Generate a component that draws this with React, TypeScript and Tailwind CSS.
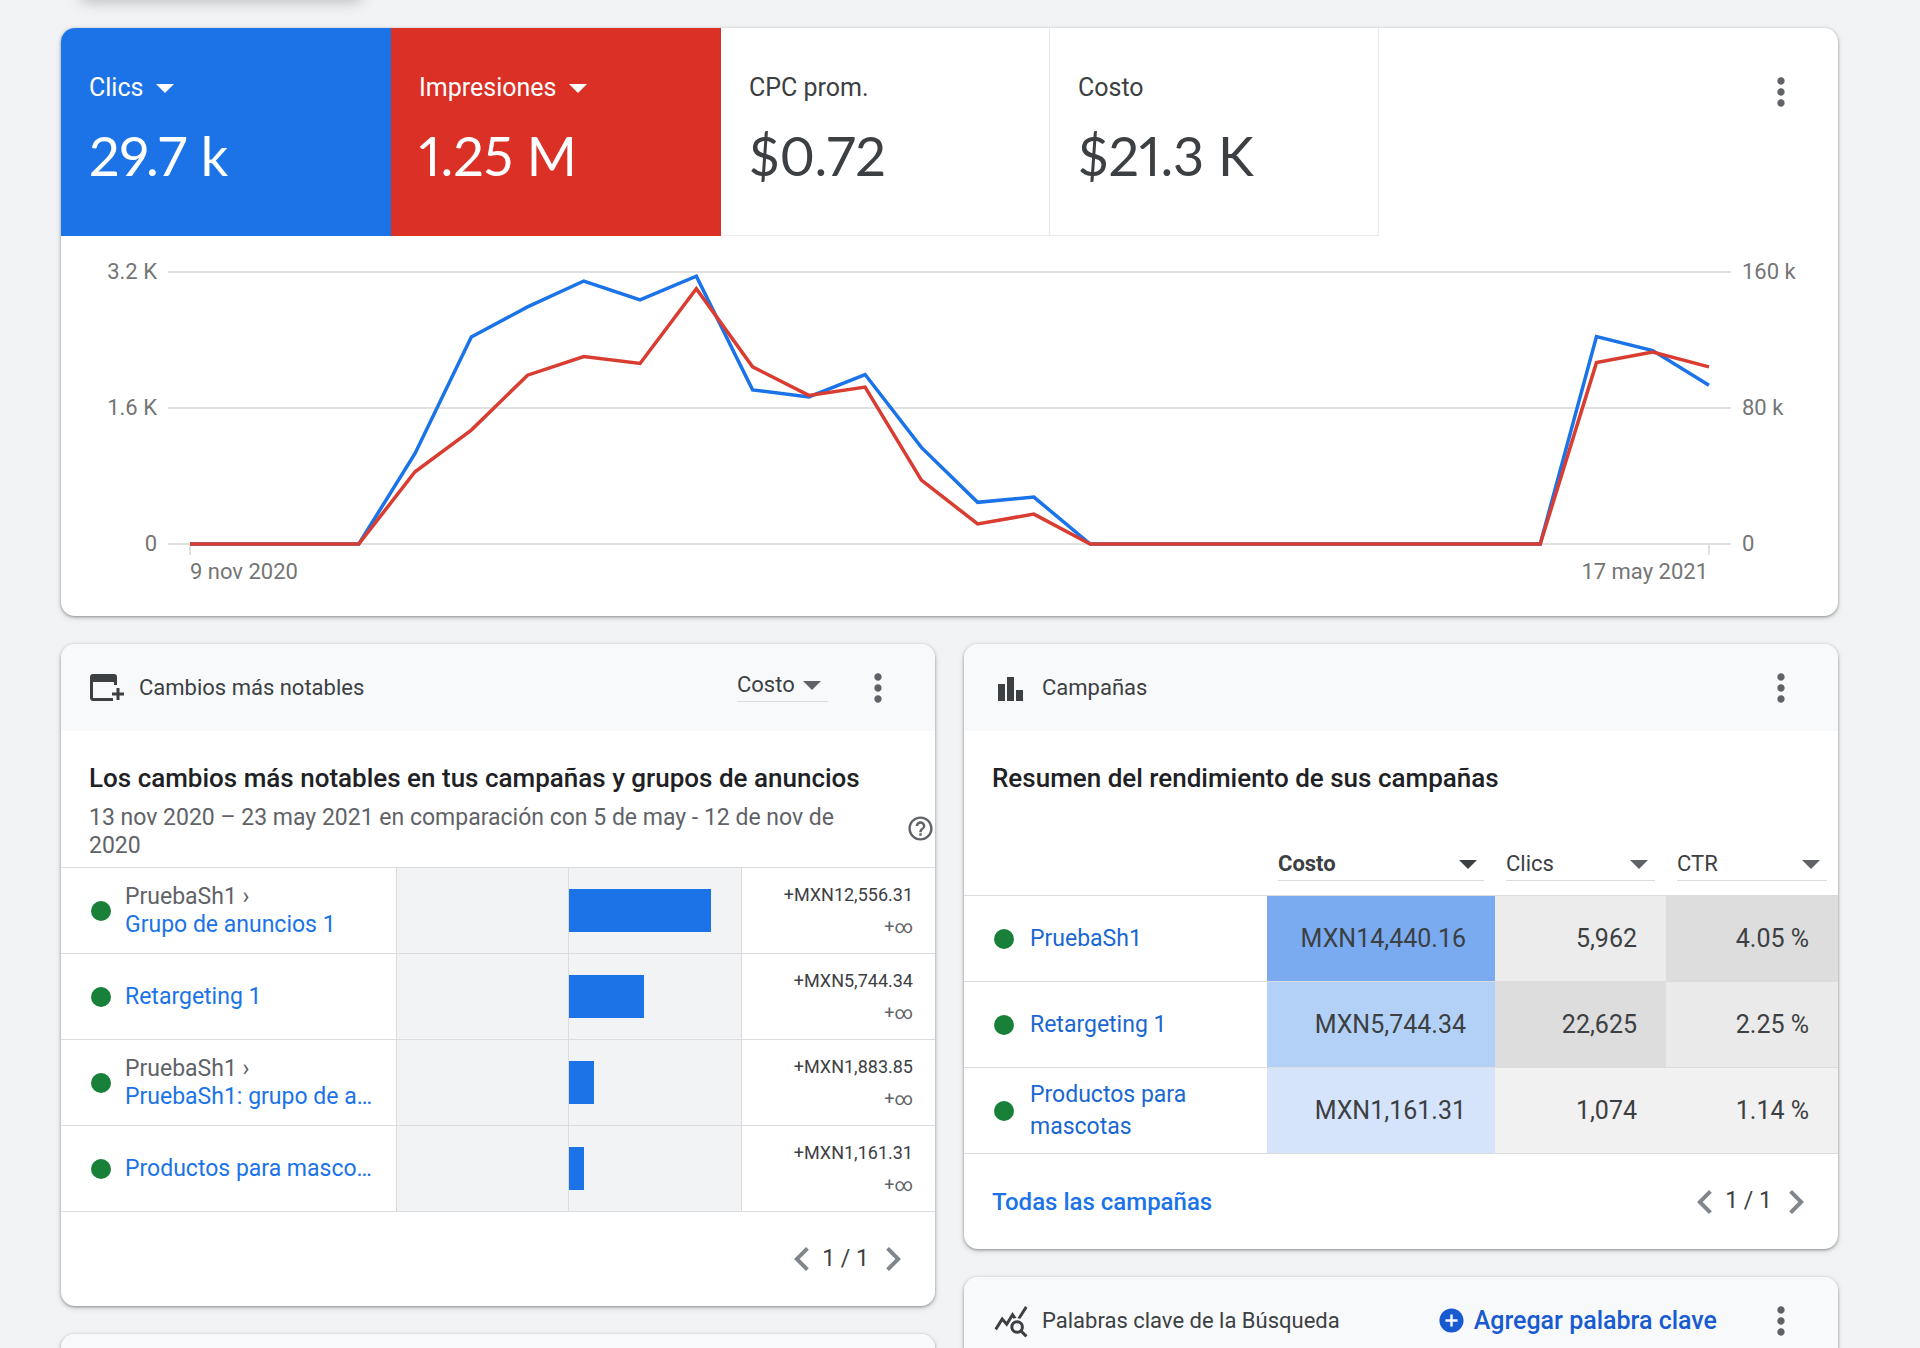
import { useState } from "react";
import {
  MdAddCircle,
  MdChevronLeft,
  MdChevronRight,
  MdHelpOutline,
  MdMoreVert,
  MdQueryStats,
} from "react-icons/md";

const clicks = [
  0, 0, 0, 0, 1066, 2436, 2789, 3094, 2871, 3150, 1813, 1731, 1994, 1136, 490, 552,
  0, 0, 0, 0, 0, 0, 0, 0, 0, 2440, 2276, 1869,
];
const impressions = [
  0, 0, 0, 0, 42.5, 67, 99.3, 110.3, 106.2, 150.2, 104.2, 87.4, 92.3, 37.6, 11.8, 17.6,
  0, 0, 0, 0, 0, 0, 0, 0, 0, 106.7, 112.9, 104.2,
];

const changes = [
  { parent: "PruebaSh1", name: "Grupo de anuncios 1", bar: 82.8, amount: "+MXN12,556.31" },
  { parent: "", name: "Retargeting 1", bar: 44, amount: "+MXN5,744.34" },
  { parent: "PruebaSh1", name: "PruebaSh1: grupo de a…", bar: 14.6, amount: "+MXN1,883.85" },
  { parent: "", name: "Productos para masco…", bar: 9, amount: "+MXN1,161.31" },
];

const campaigns = [
  { name: "PruebaSh1", cost: "MXN14,440.16", clicks: "5,962", ctr: "4.05 %", colors: ["bg-[#7aabf0]", "bg-[#ececec]", "bg-[#dddddd]"] },
  { name: "Retargeting 1", cost: "MXN5,744.34", clicks: "22,625", ctr: "2.25 %", colors: ["bg-[#b3d1f7]", "bg-[#dddddd]", "bg-[#eaeaea]"] },
  { name: "Productos para mascotas", cost: "MXN1,161.31", clicks: "1,074", ctr: "1.14 %", colors: ["bg-[#d5e4fb]", "bg-[#f1f1f1]", "bg-[#f1f1f1]"] },
];

const metrics = ["Costo", "Clics", "CTR", "Impresiones", "CPC prom."];

const card =
  "overflow-hidden rounded-[14px] bg-white shadow-[0_1px_3px_rgba(60,64,67,0.5),0_2px_6px_rgba(60,64,67,0.15)]";

function Caret({ className = "" }: { className?: string }) {
  return (
    <svg viewBox="0 0 18 9" className={"h-[9px] w-[18px] shrink-0 " + className} fill="currentColor" aria-hidden="true">
      <path d="M0 0h18L9 9z" />
    </svg>
  );
}

function MoreButton() {
  return (
    <button aria-label="Más opciones" className="flex size-11 shrink-0 items-center justify-center text-[#5f6368]">
      <MdMoreVert size={44} />
    </button>
  );
}

function Dot() {
  return <span className="size-5 shrink-0 rounded-full bg-[#188038]" />;
}

function MetricSelect({ label, initial, bold }: { label: string; initial: string; bold?: boolean }) {
  const [value, setValue] = useState(initial);
  return (
    <div className={"relative border-b border-[#dadce0] " + (bold ? "font-bold text-[#3c4043]" : "font-normal text-[#5f6368]")}>
      <select
        aria-label={label}
        value={value}
        onChange={(e) => setValue(e.target.value)}
        className="block h-8 w-full appearance-none bg-transparent text-[22px] leading-8 text-[#3c4043]"
      >
        {metrics.map((m) => (
          <option key={m}>{m}</option>
        ))}
      </select>
      <Caret className="pointer-events-none absolute right-[7px] top-3" />
    </div>
  );
}

function TileSelect({ label, initial }: { label: string; initial: string }) {
  const [value, setValue] = useState(initial);
  return (
    <div className="relative w-fit">
      <select
        aria-label={label}
        value={value}
        onChange={(e) => setValue(e.target.value)}
        className="block h-8 appearance-none bg-transparent pr-[31px] text-[25px] leading-8 [field-sizing:content]"
      >
        {metrics.map((m) => (
          <option key={m}>{m}</option>
        ))}
      </select>
      <Caret className="pointer-events-none absolute right-0 top-3" />
    </div>
  );
}

function Pager() {
  return (
    <div className="flex items-center text-[23px] text-[#3c4043]">
      <button aria-label="Anterior" className="-mr-1 text-[#80868b]">
        <MdChevronLeft size={48} />
      </button>
      <span>1 / 1</span>
      <button aria-label="Siguiente" className="text-[#80868b]">
        <MdChevronRight size={48} />
      </button>
    </div>
  );
}

function CardHeader({ icon, title, children }: { icon: any; title: string; children?: any }) {
  return (
    <header className="flex h-[87px] items-center bg-[#f8f9fb] pl-[29px] pr-[35px] text-[#3c4043]">
      <div className="flex w-[49px] shrink-0 items-center">{icon}</div>
      <h2 className="mr-auto text-[22px] leading-8">{title}</h2>
      {children}
      <MoreButton />
    </header>
  );
}

function Chart() {
  const left = 129;
  const right = 1648;
  const base = 308;
  const height = 272;
  const line = (values: number[], max: number) =>
    values
      .map((v, i) => `${left + (i * (right - left)) / (values.length - 1)},${base - (v / max) * height}`)
      .join(" ");

  return (
    <svg viewBox="0 0 1777 380" className="block h-auto w-full" fontSize="22" fill="#757575" role="img" aria-label="Clics e impresiones">
      <g stroke="#e0e0e0" strokeWidth="2">
        <path d="M107 36H1670M107 172H1670M107 308H1670M129 308V319M1648 308V319" />
      </g>
      <g fill="none" strokeWidth="3.5" strokeLinejoin="miter">
        <polyline points={line(clicks, 3200)} stroke="#1a73e8" />
        <polyline points={line(impressions, 160)} stroke="#d93c30" />
      </g>
      <g textAnchor="end">
        <text x="96" y="43">3.2 K</text>
        <text x="96" y="179">1.6 K</text>
        <text x="96" y="315">0</text>
        <text x="1647" y="343">17 may 2021</text>
      </g>
      <text x="1681" y="43">160 k</text>
      <text x="1681" y="179">80 k</text>
      <text x="1681" y="315">0</text>
      <text x="129" y="343">9 nov 2020</text>
    </svg>
  );
}

function Overview() {
  return (
    <section className={card}>
      <div className="flex">
        <div className="h-52 w-[330px] bg-[#1c73e8] pl-7 pt-11 text-white">
          <TileSelect label="Primera métrica" initial="Clics" />
          <p className="mt-4 font-[Lato] text-[54px] leading-[72px] proportional-nums">29.7 k</p>
        </div>
        <div className="h-52 w-[330px] bg-[#db3026] pl-7 pt-11 text-white">
          <TileSelect label="Segunda métrica" initial="Impresiones" />
          <p className="mt-4 font-[Lato] text-[54px] leading-[72px] proportional-nums">1.25 M</p>
        </div>
        <div className="h-52 w-[329px] border-b border-r border-[#e8eaed] pl-7 pt-11 text-[#3c4043]">
          <p className="text-[25px] leading-8">CPC prom.</p>
          <p className="mt-4 font-[Lato] text-[54px] leading-[72px] proportional-nums">$0.72</p>
        </div>
        <div className="h-52 w-[329px] border-b border-r border-[#e8eaed] pl-7 pt-11 text-[#3c4043]">
          <p className="text-[25px] leading-8">Costo</p>
          <p className="mt-4 font-[Lato] text-[54px] leading-[72px] proportional-nums">$21.3 K</p>
        </div>
        <div className="ml-auto pr-[35px] pt-[42px]">
          <MoreButton />
        </div>
      </div>
      <Chart />
    </section>
  );
}

function ChangesCard() {
  const icon = (
    <svg viewBox="0 0 34 28" className="h-7 w-[34px]" aria-hidden="true">
      <path d="M23 25.5H3.5a2 2 0 0 1-2-2V4" fill="none" stroke="#3c4043" strokeWidth="3" />
      <path d="M0 8V3a3 3 0 0 1 3-3h21a3 3 0 0 1 3 3v8h-3V8z" fill="#3c4043" />
      <path d="M28 14v12M22 20h12" stroke="#3c4043" strokeWidth="3" />
    </svg>
  );
  return (
    <section className={card}>
      <CardHeader icon={icon} title="Cambios más notables">
        <div className="mb-1 mr-7 w-[91px]">
          <MetricSelect label="Métrica de cambios" initial="Costo" />
        </div>
      </CardHeader>
      <h3 className="pl-7 pt-[31px] text-[26px] font-medium leading-8 text-[#202124]">
        Los cambios más notables en tus campañas y grupos de anuncios
      </h3>
      <div className="flex items-center pb-[7px] pl-7 pt-[10px]">
        <p className="mr-auto max-w-[780px] text-[23px] leading-7 text-[#5f6368]">
          13 nov 2020 – 23 may 2021 en comparación con 5 de may - 12 de nov de 2020
        </p>
        <button aria-label="Ayuda" className="mb-2 shrink-0 text-[#5f6368]">
          <MdHelpOutline size={29} />
        </button>
      </div>
      <table className="w-full table-fixed border-collapse border-t border-[#dadce0]">
        <colgroup>
          <col />
          <col className="w-[172px]" />
          <col className="w-[173px]" />
          <col className="w-[194px]" />
        </colgroup>
        <tbody>
          {changes.map((c) => (
            <tr key={c.name} className="h-[86px] border-b border-[#dadce0]">
              <td className="pl-[30px] pr-4">
                <div className="flex items-center gap-[14px] text-[23px] leading-7">
                  <Dot />
                  <div>
                    {c.parent && <div className="text-[#5f6368]">{c.parent} ›</div>}
                    <a href="#" className="block whitespace-nowrap text-[#1a73e8]">{c.name}</a>
                  </div>
                </div>
              </td>
              <td className="border-l border-[#dadce0] bg-[#f1f3f4]" />
              <td className="border-x border-[#dadce0] bg-[#f1f3f4]">
                <div className="h-[43px] bg-[#1c73e8]" style={{ width: `${c.bar}%` }} />
              </td>
              <td className="pr-[22px] text-right text-[18px] leading-8 text-[#3c4043]">
                <div>{c.amount}</div>
                <div className="text-[#5f6368]">+∞</div>
              </td>
            </tr>
          ))}
        </tbody>
      </table>
      <div className="flex h-[94px] items-center justify-end pr-[18px]">
        <Pager />
      </div>
    </section>
  );
}

function CampaignsCard() {
  const icon = (
    <svg viewBox="0 0 34 28" className="h-7 w-[34px]" fill="#3c4043" aria-hidden="true">
      <path d="M5 10h7v17H5zM14 3h7v24h-7zM23 16h7v11h-7z" />
    </svg>
  );
  return (
    <section className={card}>
      <CardHeader icon={icon} title="Campañas" />
      <h3 className="pl-7 pt-[31px] text-[26px] font-medium leading-8 text-[#202124]">
        Resumen del rendimiento de sus campañas
      </h3>
      <table className="mt-[54px] w-full table-fixed border-collapse text-[#3c4043]">
        <colgroup>
          <col />
          <col className="w-[228px]" />
          <col className="w-[171px]" />
          <col className="w-[172px]" />
        </colgroup>
        <thead>
          <tr className="border-b border-[#dadce0]">
            <td />
            <th scope="col" className="px-[11px] pb-[14px]">
              <MetricSelect label="Columna 1" initial="Costo" bold />
            </th>
            <th scope="col" className="px-[11px] pb-[14px]">
              <MetricSelect label="Columna 2" initial="Clics" />
            </th>
            <th scope="col" className="px-[11px] pb-[14px]">
              <MetricSelect label="Columna 3" initial="CTR" />
            </th>
          </tr>
        </thead>
        <tbody>
          {campaigns.map((c) => (
            <tr key={c.name} className="h-[86px] border-b border-[#dadce0] text-right text-[25px]">
              <td className="pl-[30px] pr-10 text-left">
                <div className="flex items-center gap-4">
                  <Dot />
                  <a href="#" className="text-[23px] leading-8 text-[#1967d2]">{c.name}</a>
                </div>
              </td>
              <td className={"pr-[29px] " + c.colors[0]}>{c.cost}</td>
              <td className={"pr-[29px] " + c.colors[1]}>{c.clicks}</td>
              <td className={"pr-[29px] " + c.colors[2]}>{c.ctr}</td>
            </tr>
          ))}
        </tbody>
      </table>
      <div className="flex h-[95px] items-center justify-between pl-7 pr-[18px]">
        <a href="#" className="text-[24px] font-medium text-[#1a73e8]">Todas las campañas</a>
        <Pager />
      </div>
    </section>
  );
}

export default function App() {
  return (
    <div className="relative h-screen overflow-hidden bg-[#f1f3f4] pl-[61px] pr-[82px] pt-7 font-[Roboto,sans-serif]">
      {/* lower edge of the floating bar that scrolled out above */}
      <div className="absolute -top-5 left-20 h-5 w-[282px] rounded-lg shadow-[0_2px_14px_rgba(60,64,67,0.3)]" />
      <main className="flex flex-col gap-7">
        <Overview />
        <div className="grid grid-cols-2 items-start gap-[29px]">
          <div className="flex flex-col gap-7">
            <ChangesCard />
            <section className={card}>
              <div className="h-[87px] bg-[#f8f9fb]" />
            </section>
          </div>
          <div className="flex flex-col gap-7">
            <CampaignsCard />
            <section className={card}>
              <CardHeader icon={<MdQueryStats size={36} />} title="Palabras clave de la Búsqueda">
                <button className="mr-[42px] flex items-center gap-2 text-[25px] font-medium text-[#185bd1]">
                  <MdAddCircle size={29} />
                  Agregar palabra clave
                </button>
              </CardHeader>
            </section>
          </div>
        </div>
      </main>
    </div>
  );
}
